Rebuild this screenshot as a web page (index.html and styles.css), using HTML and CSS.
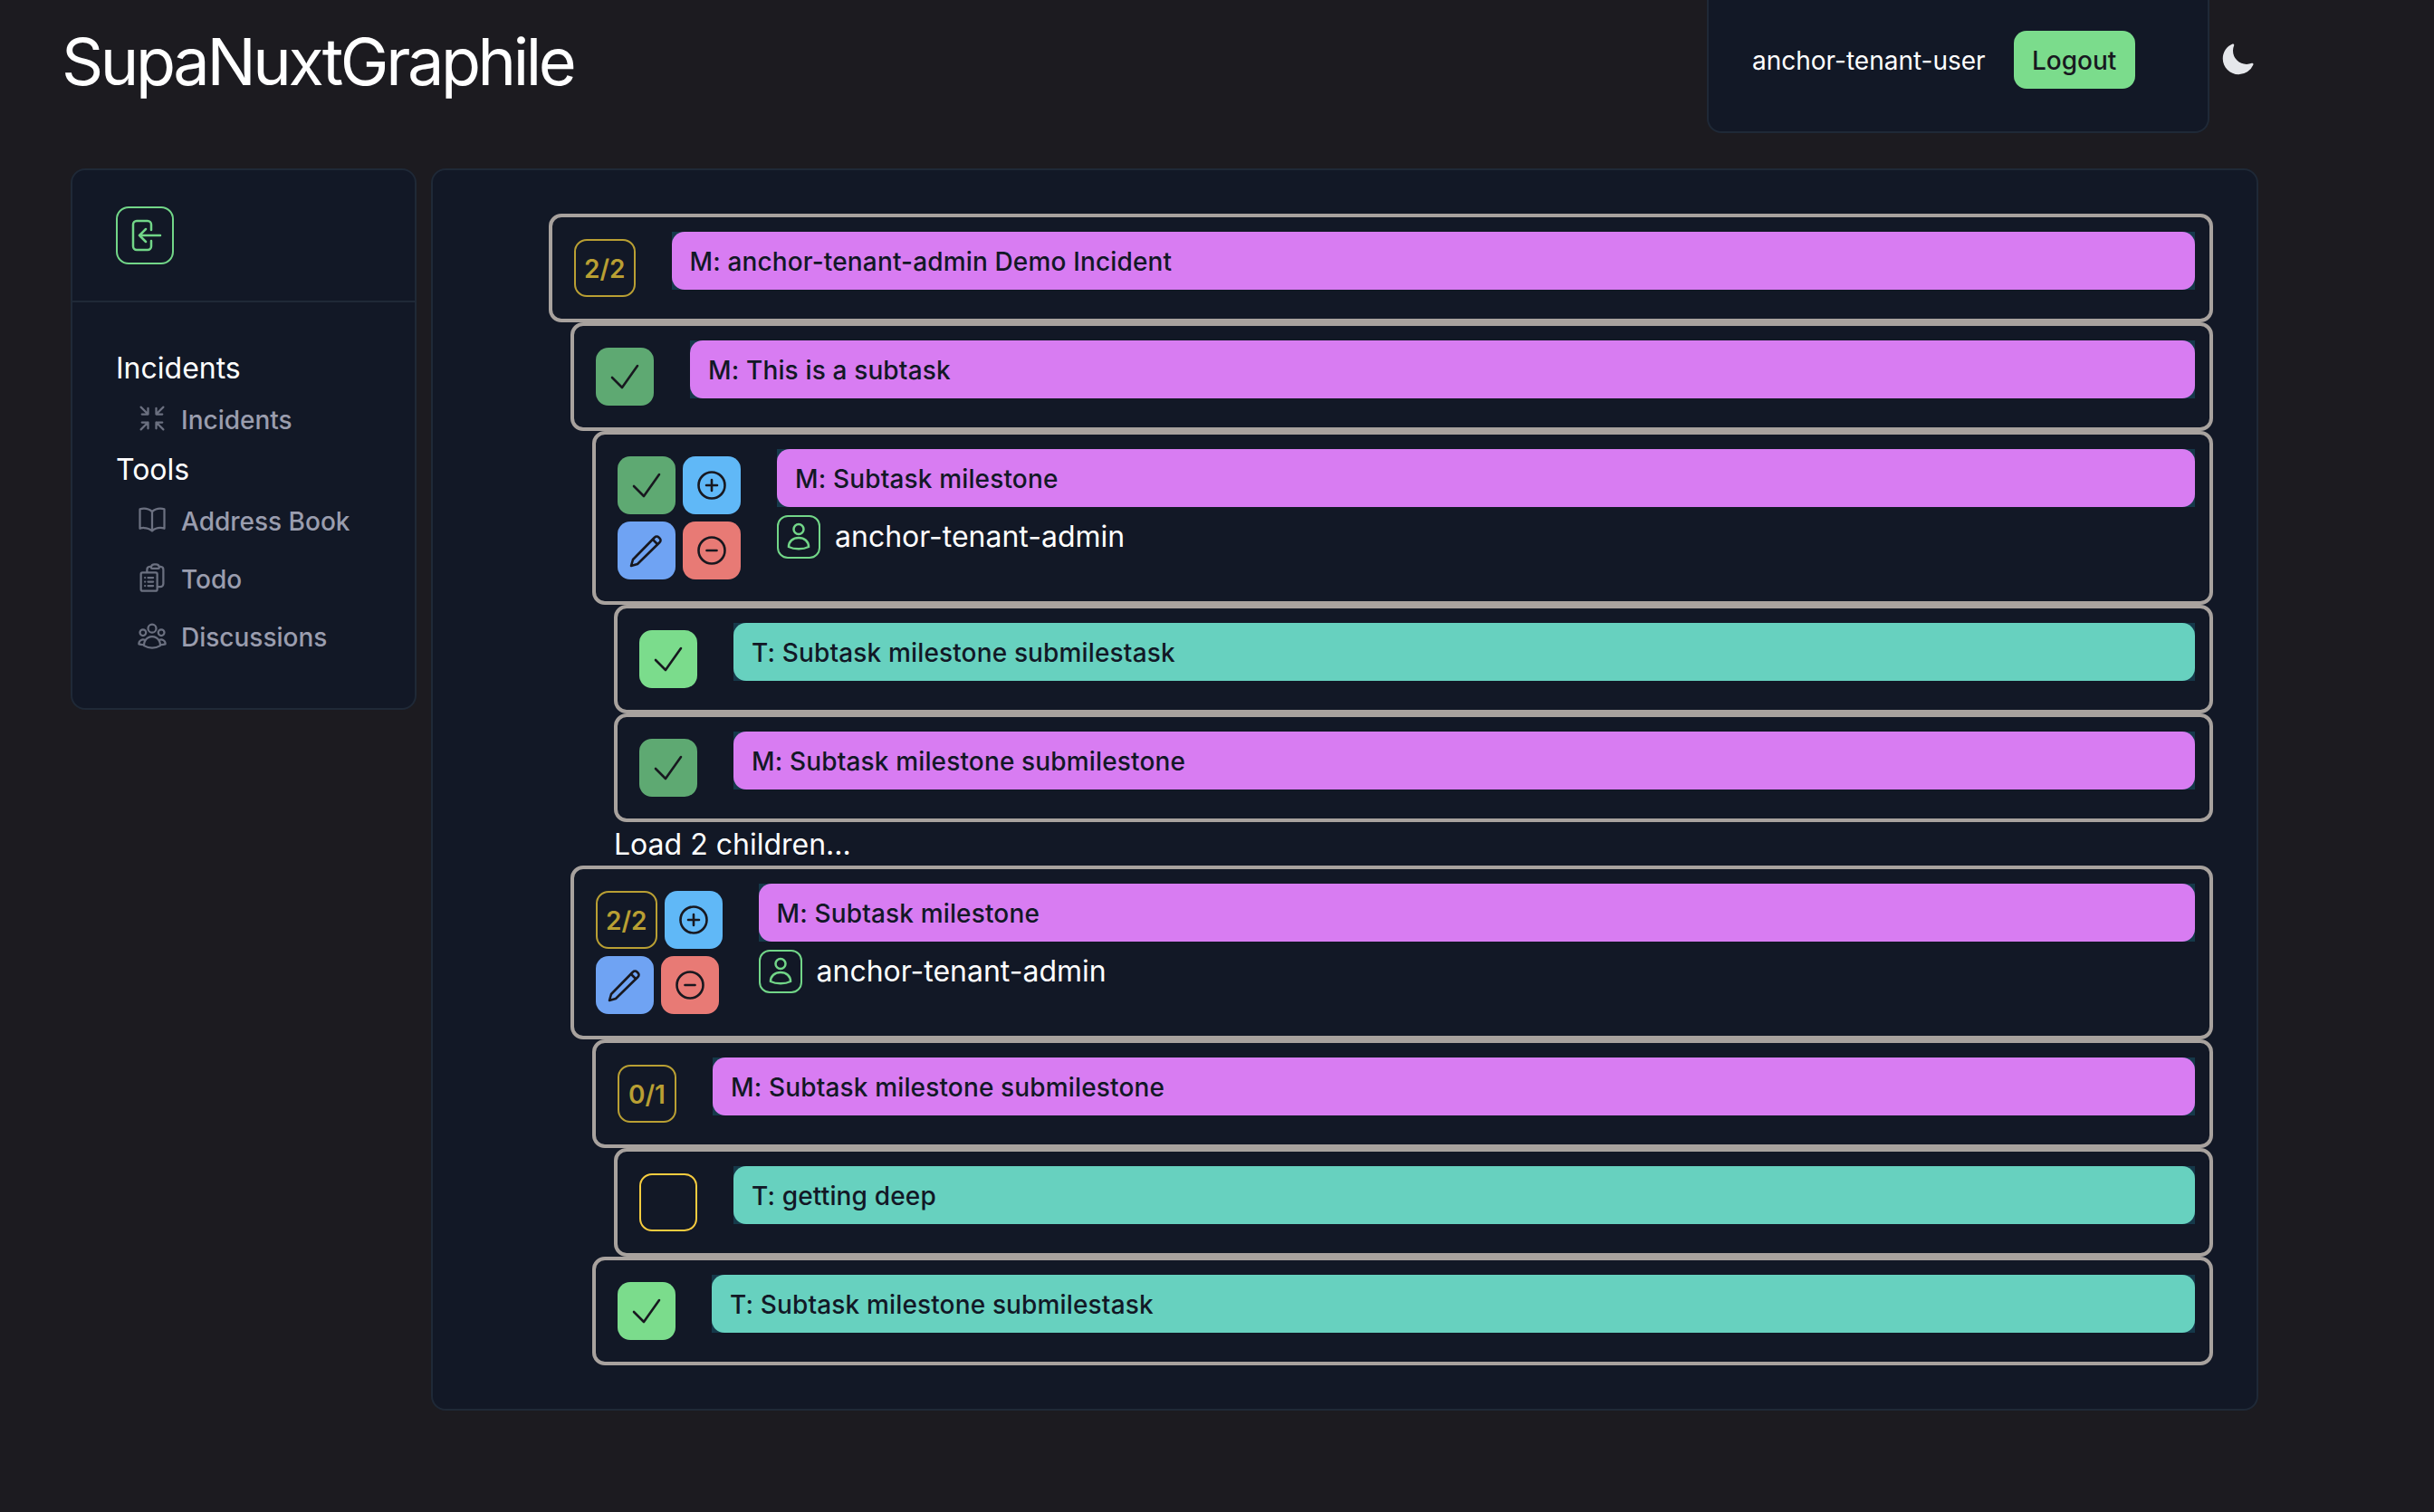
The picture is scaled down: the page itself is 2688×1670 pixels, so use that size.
FILE: index.html
```html
<!DOCTYPE html>
<html lang="en">
<head>
    <meta charset="UTF-8">
    <meta name="viewport" content="width=device-width, initial-scale=1.0">
    <title>SupaNuxtGraphile</title>
    <link rel="stylesheet" href="styles.css">
</head>

<body>
    <svg class="icon-defs" width="0" height="0" aria-hidden="true">
        <symbol id="i-check" viewBox="0 0 40 40"><path d="M6 21l11 11L34 8"/></symbol>
        <symbol id="i-plus" viewBox="0 0 40 40"><circle cx="20" cy="20" r="14.5"/><path d="M20 14v12M14 20h12"/></symbol>
        <symbol id="i-minus" viewBox="0 0 40 40"><circle cx="20" cy="20" r="14.5"/><path d="M14.5 20h11"/></symbol>
        <symbol id="i-pencil" viewBox="0 0 40 40"><path d="M3 37l2-7L29 5.500a3 3 0 0 1 4.500 0l1 1a3 3 0 0 1 0 4.500L10 35z"/><path d="M27 8l5 5"/></symbol>
        <symbol id="i-person" viewBox="0 0 48 48"><circle cx="24" cy="15.500" r="5.500"/><path d="M13 35c0-6 4.500-10 11-10s11 4 11 10c-3 1.500-7 2.300-11 2.300S16 36.500 13 35z"/></symbol>
    </svg>

    <header class="app-header">
        <h1 class="app-title">SupaNuxtGraphile</h1>
        <div class="user-card">
            <span class="user-name">anchor-tenant-user</span>
            <button class="btn-logout">Logout</button>
        </div>
        <button class="btn-theme" aria-label="Toggle theme">
            <svg viewBox="0 0 24 24" width="40" height="40"><path d="M9.528 1.718a.75.75 0 0 1 .162.819A8.97 8.97 0 0 0 9 6a9 9 0 0 0 9 9 8.97 8.97 0 0 0 3.463-.69.75.75 0 0 1 .981.98 10.503 10.503 0 0 1-9.694 6.46c-5.799 0-10.5-4.7-10.5-10.5 0-4.368 2.667-8.112 6.46-9.694a.75.75 0 0 1 .818.162Z"/></svg>
        </button>
    </header>

    <div class="layout">
        <!-- Sidebar -->
        <aside class="sidebar">
            <div class="sidebar-head">
                <button class="btn-collapse" aria-label="Collapse">
                    <svg viewBox="0 0 64 64" width="64" height="64"><path d="M39 26v-6a4 4 0 0 0-4-4H23a4 4 0 0 0-4 4v24a4 4 0 0 0 4 4h12a4 4 0 0 0 4-4v-6"/><path d="M49 32H26M33 25l-7 7 7 7"/></svg>
                </button>
            </div>
            <nav class="sidebar-nav">
                <div class="nav-group">Incidents</div>
                <a class="nav-item">
                    <svg class="nav-icon" viewBox="0 0 24 24"><path d="M9 9V4.5M9 9H4.5M9 9 3.75 3.75M9 15v4.5M9 15H4.5M9 15l-5.25 5.25M15 9h4.5M15 9V4.5M15 9l5.25-5.25M15 15h4.500M15 15v4.500m0-4.500 5.250 5.250"/></svg>
                    <span class="nav-text">Incidents</span>
                </a>
                <div class="nav-group">Tools</div>
                <a class="nav-item">
                    <svg class="nav-icon" viewBox="0 0 24 24"><path d="M12 6.042A8.967 8.967 0 0 0 6 3.75c-1.052 0-2.062.18-3 .512v14.25A8.987 8.987 0 0 1 6 18c2.305 0 4.408.867 6 2.292m0-14.25a8.966 8.966 0 0 1 6-2.292c1.052 0 2.062.18 3 .512v14.25A8.987 8.987 0 0 0 18 18a8.967 8.967 0 0 0-6 2.292m0-14.25v14.25"/></svg>
                    <span class="nav-text">Address Book</span>
                </a>
                <a class="nav-item">
                    <svg class="nav-icon" viewBox="0 0 24 24"><path d="M9 12h3.75M9 15h3.75M9 18h3.75m3 .75H18a2.25 2.25 0 0 0 2.25-2.25V6.108c0-1.135-.845-2.098-1.976-2.192a48.424 48.424 0 0 0-1.123-.08m-5.801 0c-.065.21-.1.433-.1.664 0 .414.336.75.75.75h4.5a.75.75 0 0 0 .75-.75 2.25 2.25 0 0 0-.1-.664m-5.8 0A2.251 2.251 0 0 1 13.5 2.25H15c1.012 0 1.867.668 2.15 1.586m-5.8 0c-.376.023-.75.05-1.124.08C9.095 4.01 8.25 4.973 8.25 6.108V8.25m0 0H4.875c-.621 0-1.125.504-1.125 1.125v11.25c0 .621.504 1.125 1.125 1.125h9.75c.621 0 1.125-.504 1.125-1.125V9.375c0-.621-.504-1.125-1.125-1.125H8.25ZM6.75 12h.008v.008H6.75V12Zm0 3h.008v.008H6.75V15Zm0 3h.008v.008H6.75V18Z"/></svg>
                    <span class="nav-text">Todo</span>
                </a>
                <a class="nav-item">
                    <svg class="nav-icon" viewBox="0 0 24 24"><path d="M18 18.72a9.094 9.094 0 0 0 3.741-.479 3 3 0 0 0-4.682-2.72m.94 3.198.001.031c0 .225-.012.447-.037.666A11.944 11.944 0 0 1 12 21c-2.17 0-4.207-.576-5.963-1.584A6.062 6.062 0 0 1 6 18.719m12 0a5.971 5.971 0 0 0-.941-3.197m0 0A5.995 5.995 0 0 0 12 12.75a5.995 5.995 0 0 0-5.058 2.772m0 0a3 3 0 0 0-4.681 2.72 8.986 8.986 0 0 0 3.74.477m.94-3.197a5.971 5.971 0 0 0-.94 3.197M15 6.75a3 3 0 1 1-6 0 3 3 0 0 1 6 0Zm6 3a2.25 2.25 0 1 1-4.5 0 2.25 2.25 0 0 1 4.5 0Zm-13.5 0a2.25 2.25 0 1 1-4.5 0 2.25 2.25 0 0 1 4.5 0Z"/></svg>
                    <span class="nav-text">Discussions</span>
                </a>
            </nav>
        </aside>

        <!-- Task tree -->
        <main class="main-card">
            <div class="tree">
                <div class="row">
                    <div class="controls">
                        <div class="control-line"><span class="badge">2/2</span></div>
                    </div>
                    <div class="row-body">
                        <div class="task-bar"><div class="task-title milestone">M: anchor-tenant-admin Demo Incident</div></div>
                    </div>
                </div>

                <div class="children">
                    <div class="row">
                        <div class="controls">
                            <div class="control-line"><button class="btn-square done-dim"><svg class="act-icon"><use href="#i-check"/></svg></button></div>
                        </div>
                        <div class="row-body">
                            <div class="task-bar"><div class="task-title milestone">M: This is a subtask</div></div>
                        </div>
                    </div>

                    <div class="children">
                        <div class="row">
                            <div class="controls">
                                <div class="control-line">
                                    <button class="btn-square done-dim"><svg class="act-icon"><use href="#i-check"/></svg></button>
                                    <button class="btn-square add"><svg class="act-icon"><use href="#i-plus"/></svg></button>
                                </div>
                                <div class="control-line">
                                    <button class="btn-square edit"><svg class="act-icon"><use href="#i-pencil"/></svg></button>
                                    <button class="btn-square remove"><svg class="act-icon"><use href="#i-minus"/></svg></button>
                                </div>
                            </div>
                            <div class="row-body">
                                <div class="task-bar"><div class="task-title milestone">M: Subtask milestone</div></div>
                                <div class="owner">
                                    <span class="owner-chip"><svg class="owner-icon"><use href="#i-person"/></svg></span>
                                    <span class="owner-name">anchor-tenant-admin</span>
                                </div>
                            </div>
                        </div>

                        <div class="children">
                            <div class="row">
                                <div class="controls">
                                    <div class="control-line"><button class="btn-square done"><svg class="act-icon"><use href="#i-check"/></svg></button></div>
                                </div>
                                <div class="row-body">
                                    <div class="task-bar"><div class="task-title task">T: Subtask milestone submilestask</div></div>
                                </div>
                            </div>
                            <div class="row">
                                <div class="controls">
                                    <div class="control-line"><button class="btn-square done-dim"><svg class="act-icon"><use href="#i-check"/></svg></button></div>
                                </div>
                                <div class="row-body">
                                    <div class="task-bar"><div class="task-title milestone">M: Subtask milestone submilestone</div></div>
                                </div>
                            </div>
                            <div class="load-more">Load 2 children...</div>
                        </div>
                    </div>

                    <div class="row">
                        <div class="controls">
                            <div class="control-line">
                                <span class="badge">2/2</span>
                                <button class="btn-square add"><svg class="act-icon"><use href="#i-plus"/></svg></button>
                            </div>
                            <div class="control-line">
                                <button class="btn-square edit"><svg class="act-icon"><use href="#i-pencil"/></svg></button>
                                <button class="btn-square remove"><svg class="act-icon"><use href="#i-minus"/></svg></button>
                            </div>
                        </div>
                        <div class="row-body">
                            <div class="task-bar"><div class="task-title milestone">M: Subtask milestone</div></div>
                            <div class="owner">
                                <span class="owner-chip"><svg class="owner-icon"><use href="#i-person"/></svg></span>
                                <span class="owner-name">anchor-tenant-admin</span>
                            </div>
                        </div>
                    </div>

                    <div class="children">
                        <div class="row">
                            <div class="controls">
                                <div class="control-line"><span class="badge">0/1</span></div>
                            </div>
                            <div class="row-body">
                                <div class="task-bar"><div class="task-title milestone">M: Subtask milestone submilestone</div></div>
                            </div>
                        </div>
                        <div class="children">
                            <div class="row">
                                <div class="controls">
                                    <div class="control-line"><button class="btn-square todo"></button></div>
                                </div>
                                <div class="row-body">
                                    <div class="task-bar"><div class="task-title task">T: getting deep</div></div>
                                </div>
                            </div>
                        </div>
                        <div class="row">
                            <div class="controls">
                                <div class="control-line"><button class="btn-square done"><svg class="act-icon"><use href="#i-check"/></svg></button></div>
                            </div>
                            <div class="row-body">
                                <div class="task-bar"><div class="task-title task">T: Subtask milestone submilestask</div></div>
                            </div>
                        </div>
                    </div>
                </div>
            </div>
        </main>
    </div>
</body>
</html>
```
FILE: styles.css
```css
body {
    margin: 0;
    min-height: 1670px;
    background-color: #1c1b20;
    color: #ffffff;
    font-family: Inter, 'Noto Sans', sans-serif;
    font-size: 32px;
    line-height: 48px;
}

button {
    font-family: inherit;
    border: none;
    padding: 0;
    cursor: pointer;
}

.icon-defs {
    position: absolute;
}

/* header */
.app-header {
    display: flex;
    align-items: flex-start;
    height: 186px;
    padding-left: 68px;
}

.app-title {
    margin: 0;
    font-size: 72px;
    font-weight: 400;
    line-height: 136px;
    letter-spacing: -3.4px;
}

.user-card {
    display: flex;
    align-items: center;
    box-sizing: border-box;
    width: 555px;
    height: 147px;
    margin-left: auto;
    padding: 0 48px 13px;
    background-color: #121826;
    border: 2px solid #1f2937;
    border-top: none;
    border-radius: 0 0 16px 16px;
}

.user-name {
    padding-top: 2px;
    font-size: 28px;
    line-height: 40px;
}

.btn-logout {
    width: 134px;
    height: 64px;
    margin-left: 31px;
    padding-top: 2px;
    background-color: #7bdc8c;
    color: #18181f;
    border-radius: 14px;
    font-size: 28px;
    font-weight: 500;
}

.btn-theme {
    width: 40px;
    height: 40px;
    margin: 46px 197px 0 11px;
    background: none;
}

.btn-theme svg {
    display: block;
    fill: #e5e7eb;
}

/* layout */
.layout {
    display: flex;
    align-items: flex-start;
    gap: 16px;
    padding-left: 78px;
}

.sidebar {
    box-sizing: border-box;
    width: 382px;
    background-color: #121826;
    border: 2px solid #1f2937;
    border-radius: 16px;
}

.sidebar-head {
    padding: 40px 48px;
    border-bottom: 2px solid #1f2937;
}

.btn-collapse {
    display: block;
    width: 64px;
    height: 64px;
    background: none;
    border: 2px solid #72d688;
    border-radius: 14px;
    box-sizing: border-box;
}

.btn-collapse svg {
    display: block;
    margin: -2px;
    fill: none;
    stroke: #72d688;
    stroke-width: 2.500;
    stroke-linecap: round;
    stroke-linejoin: round;
}

.sidebar-nav {
    padding: 48px;
}

.nav-group {
    height: 48px;
    line-height: 50px;
}

.nav-item {
    display: flex;
    align-items: center;
    gap: 14px;
    height: 64px;
    padding-left: 22px;
    color: #9a9dae;
    font-size: 28px;
    font-weight: 500;
}

.nav-text {
    padding-top: 3px;
}

.nav-icon {
    flex: none;
    width: 36px;
    height: 36px;
    fill: none;
    stroke: #6b7080;
    stroke-width: 1.5;
    stroke-linecap: round;
    stroke-linejoin: round;
}

.main-card {
    box-sizing: border-box;
    width: 2018px;
    padding: 48px 48px 48px 128px;
    background-color: #121826;
    border: 2px solid #1f2937;
    border-radius: 16px;
}

/* task tree */
.children {
    margin-left: 24px;
}

.row {
    display: flex;
    box-sizing: border-box;
    padding: 16px 16px 16px 24px;
    border: 4px solid #a8a29e;
    border-radius: 14px;
}

.controls {
    flex: none;
    display: flex;
    flex-direction: column;
    gap: 8px;
    margin: 8px 0;
}

.control-line {
    display: flex;
    gap: 8px;
}

.badge {
    display: flex;
    align-items: center;
    justify-content: center;
    box-sizing: border-box;
    min-width: 65px;
    height: 64px;
    padding: 2px 9px 0;
    border: 2px solid #b99f33;
    border-radius: 14px;
    color: #b99f33;
    font-size: 28px;
    font-weight: 600;
}

.btn-square {
    display: block;
    width: 64px;
    height: 64px;
    border-radius: 14px;
}

.btn-square.done { background-color: #7bdc8c; }
.btn-square.done-dim { background-color: #5ea972; }
.btn-square.add { background-color: #60b8f7; }
.btn-square.edit { background-color: #6fa3f3; }
.btn-square.remove { background-color: #e87a75; }

.btn-square.todo {
    box-sizing: border-box;
    background: none;
    border: 2px solid #f6cc3f;
}

.act-icon {
    display: block;
    width: 40px;
    height: 40px;
    margin: 12px;
    fill: none;
    stroke: #18181f;
    stroke-width: 2.600;
    stroke-linecap: round;
    stroke-linejoin: round;
}

.row-body {
    flex: 1;
    margin-left: 40px;
}

.task-bar {
    background-color: #15394a;
}

.task-title {
    height: 64px;
    padding: 0 20px;
    border-radius: 14px;
    color: #121826;
    font-size: 28px;
    font-weight: 500;
    line-height: 66px;
    letter-spacing: 0.15px;
}

.task-title.milestone { background-color: #d87cf2; }
.task-title.task { background-color: #67d1bf; }

.owner {
    display: flex;
    align-items: center;
    gap: 16px;
    margin-top: 8px;
}

.owner-name {
    line-height: 50px;
}

.owner-chip {
    box-sizing: border-box;
    width: 48px;
    height: 48px;
    border: 2px solid #72d688;
    border-radius: 12px;
}

.owner-icon {
    display: block;
    width: 48px;
    height: 48px;
    margin: -2px;
    fill: none;
    stroke: #72d688;
    stroke-width: 2.500;
}

.load-more {
    height: 48px;
    line-height: 50px;
}
```
